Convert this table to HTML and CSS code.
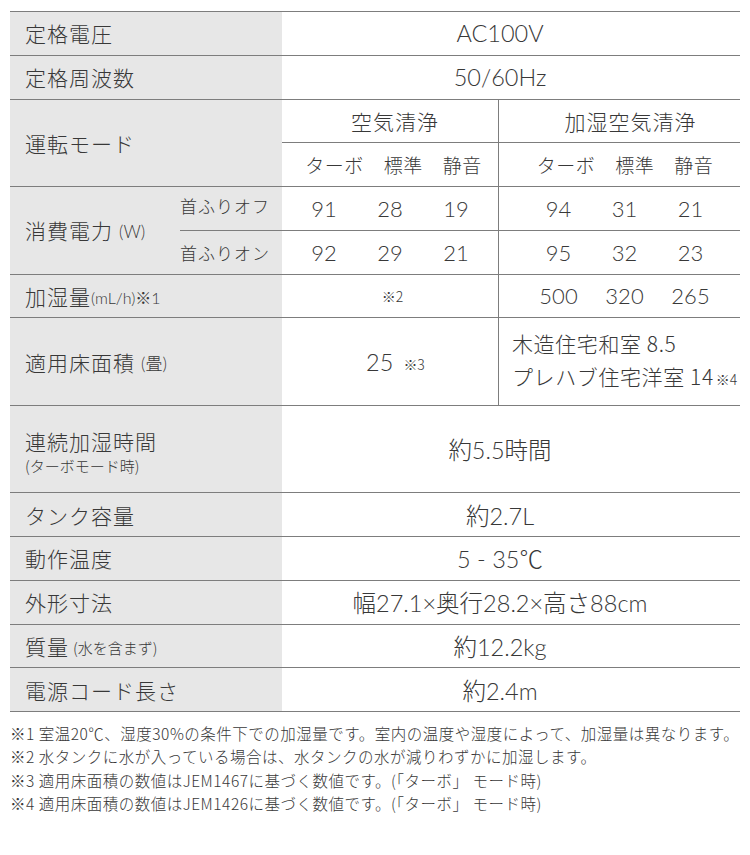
FILE: index.html
```html
<!DOCTYPE html>
<html lang="ja">
<head>
<meta charset="utf-8">
<title>仕様</title>
<link rel="stylesheet" href="styles.css">
</head>
<body>
<div class="page">
  <div class="spec">
    <div class="cell lab cl r1">定格電圧</div>
    <div class="cell val cv r1">AC100V</div>

    <div class="cell lab cl r2">定格周波数</div>
    <div class="cell val cv r2">50/60Hz</div>

    <div class="cell lab cl r3s">運転モード</div>
    <div class="cell val cL r3 hd hdL">空気清浄</div>
    <div class="cell val cR r3 hd hdR">加湿空気清浄</div>
    <div class="cell val cL r4 sub subL"><span>ターボ</span><span>標準</span><span>静音</span></div>
    <div class="cell val cR r4 sub subR"><span>ターボ</span><span>標準</span><span>静音</span></div>

    <div class="cell lab c1 r5s">消費電力<small class="unit">(W)</small></div>
    <div class="cell lab2 c2 r5 up">首ふりオフ</div>
    <div class="cell val cL r5 nums numsL"><span>91</span><span>28</span><span>19</span></div>
    <div class="cell val cR r5 nums numsR"><span>94</span><span>31</span><span>21</span></div>
    <div class="cell lab2 c2 r6">首ふりオン</div>
    <div class="cell val cL r6 nums numsL"><span>92</span><span>29</span><span>21</span></div>
    <div class="cell val cR r6 nums numsR"><span>95</span><span>32</span><span>23</span></div>

    <div class="cell lab cl r7">加湿量<small class="unit2">(mL/h)※1</small></div>
    <div class="cell val cL r7 note2"><small class="mark">※2</small></div>
    <div class="cell val cR r7 nums numsR"><span>500</span><span>320</span><span>265</span></div>

    <div class="cell lab cl r8s">適用床面積<small class="unit">(畳)</small></div>
    <div class="cell val cL r8s area">25<small class="mark m3">※3</small></div>
    <div class="cell val cR r8s area2">
      <div>木造住宅和室 8.5</div>
      <div>プレハブ住宅洋室 14<small class="mark">※4</small></div>
    </div>

    <div class="cell lab cl r10s stack">
      <div class="main">連続加湿時間</div>
      <div class="subtxt">(ターボモード時)</div>
    </div>
    <div class="cell val cv r10s">約5.5時間</div>

    <div class="cell lab cl r12">タンク容量</div>
    <div class="cell val cv r12">約2.7L</div>

    <div class="cell lab cl r13">動作温度</div>
    <div class="cell val cv r13">5 - 35℃</div>

    <div class="cell lab cl r14">外形寸法</div>
    <div class="cell val cv r14">幅27.1×奥行28.2×高さ88cm</div>

    <div class="cell lab cl r15">質量<small class="unit3">(水を含まず)</small></div>
    <div class="cell val cv r15">約12.2kg</div>

    <div class="cell lab cl r16">電源コード長さ</div>
    <div class="cell val cv r16">約2.4m</div>
  </div>

  <div class="notes">
    <p>※1 室温20℃、湿度30%の条件下での加湿量です。室内の温度や湿度によって、加湿量は異なります。</p>
    <p>※2 水タンクに水が入っている場合は、水タンクの水が減りわずかに加湿します。</p>
    <p>※3 適用床面積の数値はJEM1467に基づく数値です。(「ターボ」 モード時)</p>
    <p>※4 適用床面積の数値はJEM1426に基づく数値です。(「ターボ」 モード時)</p>
  </div>
</div>
</body>
</html>
```

FILE: styles.css
```css
* { box-sizing: border-box; }

html, body {
  margin: 0;
  padding: 0;
  background: #ffffff;
}

body {
  font-family: "Lato", "Noto Sans CJK JP", sans-serif;
  font-weight: 300;
  color: #383838;
}

.page {
  width: 750px;
  padding: 11px 10px 0 10px;
}

.spec {
  display: grid;
  width: 730px;
  grid-template-columns: 170px 102px 217px 241px;
  grid-template-rows: repeat(16, 43.75px);
  border-top: 1px solid #7d7d7d;
}

.cell {
  display: flex;
  align-items: center;
  border-bottom: 1px solid #7d7d7d;
  min-width: 0;
  white-space: nowrap;
}

.lab, .lab2 {
  background: #e7e7e7;
  font-family: "Noto Sans CJK JP", sans-serif;
  font-size: 21px;
  letter-spacing: 1px;
  padding-left: 15px;
}

.lab2 {
  font-size: 17px;
  padding-left: 0;
  letter-spacing: 1px;
}
.lab2.up { padding-bottom: 5px; }

.lab .unit {
  font-family: "Lato", "Noto Sans CJK JP", sans-serif;
  font-size: 17px;
  letter-spacing: 0;
  margin-left: 6px;
  padding-top: 2px;
}

.lab .unit2 {
  font-family: "Lato", "Noto Sans CJK JP", sans-serif;
  font-size: 16px;
  letter-spacing: 0;
  padding-top: 3px;
}

.lab .unit3 {
  font-family: "Noto Sans CJK JP", sans-serif;
  font-size: 15px;
  letter-spacing: 0;
  margin-left: 4px;
  padding-top: 3px;
}

.val {
  justify-content: center;
  font-size: 23.5px;
  background: #ffffff;
}

.cv { padding-right: 22px; }

/* grid placement */
.cl { grid-column: 1 / 3; }
.c1 { grid-column: 1 / 2; }
.c2 { grid-column: 2 / 3; }
.cv { grid-column: 3 / 5; }
.cL { grid-column: 3 / 4; border-right: 1px solid #7d7d7d; }
.cR { grid-column: 4 / 5; }

.r1 { grid-row: 1; }
.r2 { grid-row: 2; }
.r3 { grid-row: 3; }
.r4 { grid-row: 4; }
.r3s { grid-row: 3 / span 2; }
.r5 { grid-row: 5; }
.r6 { grid-row: 6; }
.r5s { grid-row: 5 / span 2; }
.r7 { grid-row: 7; }
.r8s { grid-row: 8 / span 2; }
.r10s { grid-row: 10 / span 2; }
.r12 { grid-row: 12; }
.r13 { grid-row: 13; }
.r14 { grid-row: 14; }
.r15 { grid-row: 15; }
.r16 { grid-row: 16; }

.hd {
  font-family: "Noto Sans CJK JP", sans-serif;
  font-size: 21px;
  letter-spacing: 1px;
}
.hdL { padding-left: 10px; }
.hdR { padding-left: 22px; }

.sub {
  font-family: "Noto Sans CJK JP", sans-serif;
  font-size: 19px;
  letter-spacing: 0.5px;
  gap: 20px;
}
.subL { padding-left: 7px; }
.subR { padding-left: 11px; }

.nums {
  font-size: 22px;
}
.nums span {
  width: 66px;
  text-align: center;
}
.numsR { padding-left: 10px; }

.mark {
  font-family: "Noto Sans CJK JP", sans-serif;
  font-size: 14px;
}
.note2 { padding-left: 5px; }

.area { padding-left: 11px; }
.area .m3 { margin-left: 10px; padding-top: 4px; }

.area2 {
  flex-direction: column;
  align-items: flex-start;
  justify-content: center;
  padding-left: 13px;
  font-size: 21px;
  line-height: 33px;
}
.area2 div { font-family: "Noto Sans CJK JP", sans-serif; letter-spacing: 0.6px; }
.area2 .mark { margin-left: 2px; letter-spacing: 0; }

.stack {
  flex-direction: column;
  align-items: flex-start;
  justify-content: center;
  padding-top: 3px;
}
.stack .main { line-height: 30px; }
.stack .subtxt {
  font-size: 15px;
  letter-spacing: 0;
  line-height: 20px;
}

.notes {
  margin-top: 10px;
  font-family: "Noto Sans CJK JP", sans-serif;
  font-size: 15.5px;
  letter-spacing: 0.5px;
  line-height: 23.3px;
}
.notes p {
  margin: 0;
  white-space: nowrap;
}
```
